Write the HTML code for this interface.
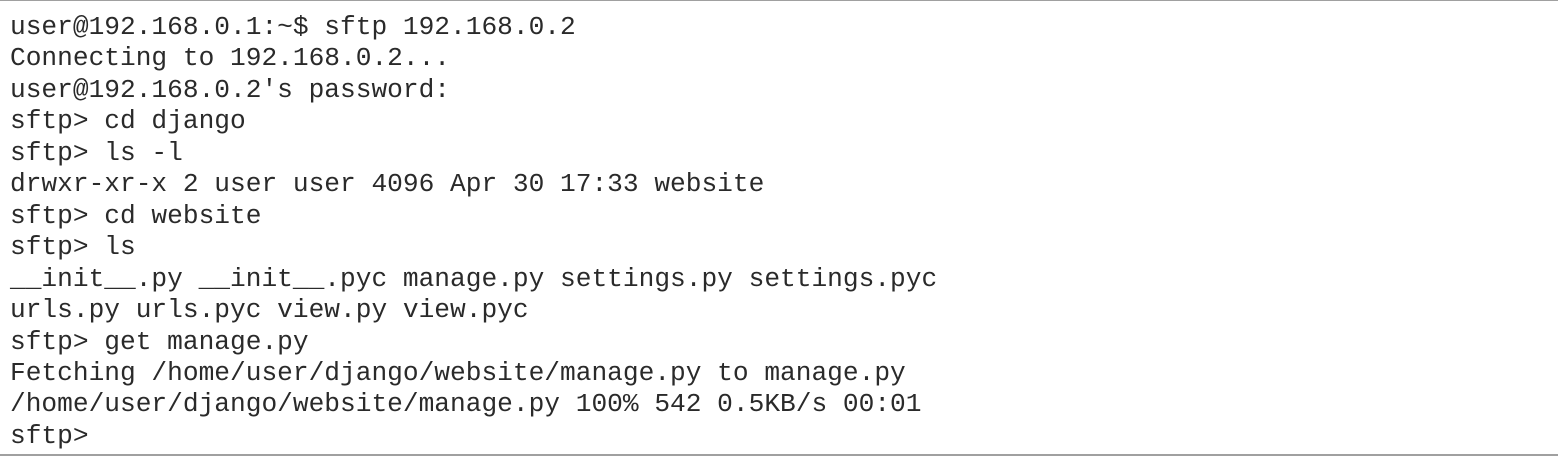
<!DOCTYPE html>
<html><head><meta charset="utf-8"><style>
html,body{margin:0;padding:0;background:#fff;}
body{width:1558px;height:456px;overflow:hidden;position:relative;}
.top{position:absolute;left:0;top:0;width:1558px;height:1px;background:#a0a0a0;}
.bot{position:absolute;left:0;top:454px;width:1558px;height:2px;background:#a0a0a0;}
pre{position:absolute;left:10px;top:12px;margin:0;font-family:"Liberation Mono",monospace;font-size:26.2px;line-height:31.45px;color:#2a2a2a;}
</style></head><body>
<div class="top"></div>
<pre>user@192.168.0.1:~$ sftp 192.168.0.2
Connecting to 192.168.0.2...
user@192.168.0.2's password:
sftp&gt; cd django
sftp&gt; ls -l
drwxr-xr-x 2 user user 4096 Apr 30 17:33 website
sftp&gt; cd website
sftp&gt; ls
__init__.py __init__.pyc manage.py settings.py settings.pyc
urls.py urls.pyc view.py view.pyc
sftp&gt; get manage.py
Fetching /home/user/django/website/manage.py to manage.py
/home/user/django/website/manage.py 100% 542 0.5KB/s 00:01
sftp&gt;</pre>
<div class="bot"></div>
</body></html>
